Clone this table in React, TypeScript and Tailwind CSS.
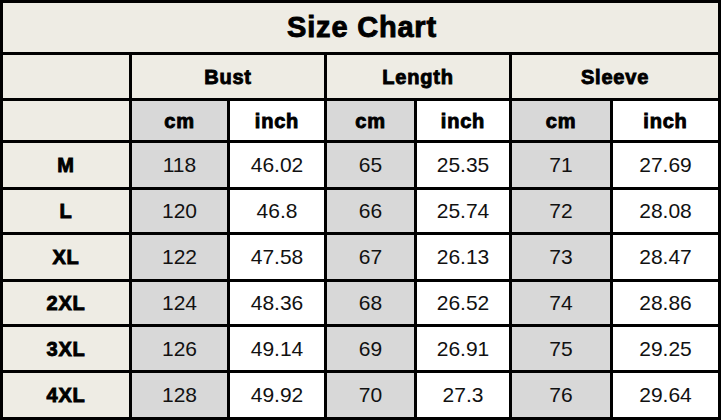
import React from "react";

const rows = [
  ["M", "118", "46.02", "65", "25.35", "71", "27.69"],
  ["L", "120", "46.8", "66", "25.74", "72", "28.08"],
  ["XL", "122", "47.58", "67", "26.13", "73", "28.47"],
  ["2XL", "124", "48.36", "68", "26.52", "74", "28.86"],
  ["3XL", "126", "49.14", "69", "26.91", "75", "29.25"],
  ["4XL", "128", "49.92", "70", "27.3", "76", "29.64"],
];

const beige = "bg-[#eeece4]";
const heavy = "font-bold [-webkit-text-stroke:0.9px_#000] tracking-[0.8px]";

export default function App() {
  return (
    <div className="w-[721px] h-[420px] bg-white font-['Liberation_Sans',Arial,sans-serif] text-black">
      <div className="grid h-full w-full bg-black p-[3px] gap-[3px] grid-cols-[126px_95px_94px_87px_92px_98px_105px] grid-rows-[49px_43px_39px_44px_42px_44px_42px_43px_44px]">
        <div className={`col-span-7 ${beige} flex items-center justify-center text-[29px] pl-[3px] ${heavy}`}>
          Size Chart
        </div>

        <div className={beige} />
        {["Bust", "Length", "Sleeve"].map((h) => (
          <div key={h} className={`col-span-2 ${beige} flex items-center justify-center text-[20px] ${heavy}`}>
            {h}
          </div>
        ))}

        <div className={beige} />
        {[0, 1, 2].map((i) => (
          <React.Fragment key={i}>
            <div className={`bg-[#d8d8d8] flex items-center justify-center text-[20px] ${heavy}`}>cm</div>
            <div className={`bg-white flex items-center justify-center text-[20px] ${heavy}`}>inch</div>
          </React.Fragment>
        ))}

        {rows.map((r) => (
          <React.Fragment key={r[0]}>
            <div className={`${beige} flex items-center justify-center text-[20px] ${heavy}`}>{r[0]}</div>
            {r.slice(1).map((v, j) => (
              <div
                key={j}
                className={`${j % 2 === 0 ? "bg-[#d8d8d8]" : "bg-white"} flex items-center justify-center text-[21px] text-[#111]`}
              >
                {v}
              </div>
            ))}
          </React.Fragment>
        ))}
      </div>
    </div>
  );
}
